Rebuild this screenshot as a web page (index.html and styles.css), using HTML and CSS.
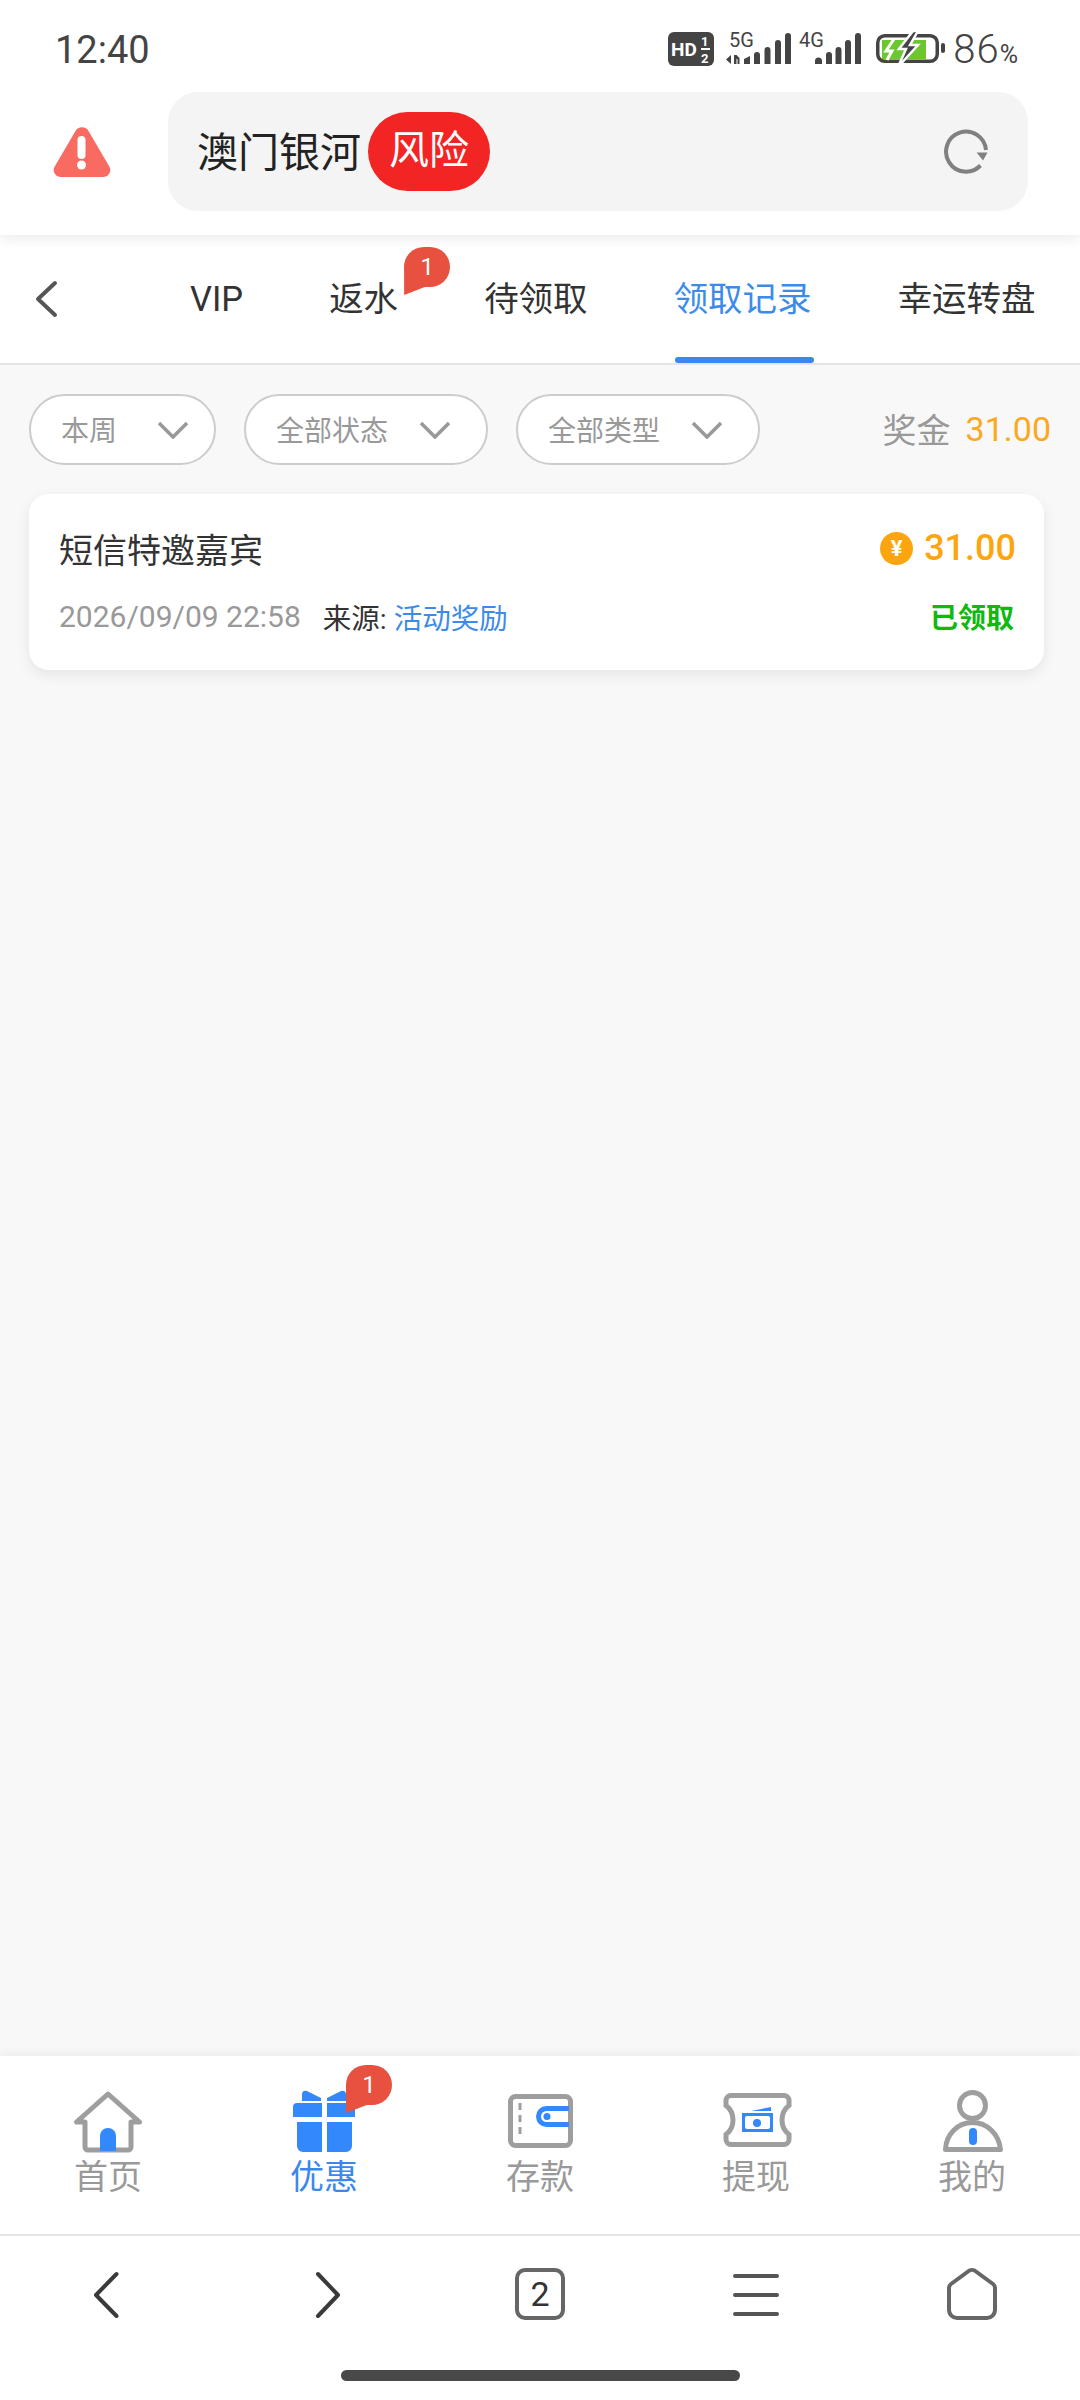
FILE: index.html
```html
<!DOCTYPE html>
<html lang="zh">
<head>
    <meta charset="utf-8">
    <title>领取记录</title>
    <link rel="stylesheet" href="styles.css">
</head>
<body>
    <div class="header">
        <div class="status-bar">
            <span class="time">12:40</span>
            <div class="status-icons">
                <svg class="ic-hd" width="46" height="34" viewBox="0 0 46 34">
                    <rect width="46" height="34" rx="6" fill="#444"/>
                    <text x="3" y="24" class="hd-text">HD</text>
                    <text x="33" y="14" class="hd-num">1</text>
                    <rect x="33" y="16" width="9" height="2" fill="#fff"/>
                    <text x="33" y="31" class="hd-num">2</text>
                </svg>
                <svg class="ic-sig ic-sig5" width="68" height="46" viewBox="0 -12 68 46">
                    <text x="5" y="15" class="sig-text">5G</text>
                    <path d="M7 23v9l-5-4.500zM10 32v-9h2.500l3 3v6h-2v-5h-1v5z" fill="#444"/>
                    <path d="M20 27l6-3v8h-6zM30 23a3 3 0 0 1 6 0v9h-6zM40.500 18a3 3 0 0 1 6 0v14h-6zM51 11a3 3 0 0 1 6 0v21h-6zM61 4a3 3 0 0 1 6 0v28h-6z" fill="#444"/>
                </svg>
                <svg class="ic-sig ic-sig4" width="64" height="46" viewBox="0 -12 64 46">
                    <text x="1" y="15" class="sig-text">4G</text>
                    <path d="M17 29a3 3 0 0 1 7 0v3h-7zM28 23a3 3 0 0 1 6 0v9h-6zM37.500 18a3 3 0 0 1 6 0v14h-6zM47 11a3 3 0 0 1 6 0v21h-6zM57 4a3 3 0 0 1 6 0v28h-6z" fill="#444"/>
                </svg>
                <svg class="ic-batt" width="70" height="38" viewBox="0 0 70 38">
                    <rect x="1.750" y="5.750" width="59.500" height="25.500" rx="7" fill="#fff" stroke="#444" stroke-width="3.500"/>
                    <path d="M6 10h44v19H6z" fill="#6cc62e"/>
                    <path d="M18 9l-8 12h6l-5 9" fill="none" stroke="#fff" stroke-width="3"/>
                    <path d="M37 1L23 19h7l-8 18 20-22h-8l8-14z" fill="#444" stroke="#fff" stroke-width="2.500"/>
                    <rect x="65" y="13" width="4" height="10" rx="2" fill="#444"/>
                </svg>
            </div>
            <span class="battery-num">86<small>%</small></span>
        </div>
        <div class="address-row">
            <div class="warn-box">
                <svg width="58" height="50" viewBox="0 0 58 50">
                    <path d="M22.500 4a7.500 7.500 0 0 1 13 0l20.500 35a7 7 0 0 1-6 11H8a7 7 0 0 1-6-11z" fill="#f96a60"/>
                    <rect x="24.500" y="9" width="8" height="23" rx="4" fill="#fff"/>
                    <circle cx="28.500" cy="38" r="4.500" fill="#fff"/>
                </svg>
            </div>
            <div class="address-pill">
                <span class="site-name">澳门银河</span>
                <span class="risk-tag">风险</span>
                <svg class="reload" width="48" height="48" viewBox="0 0 48 48">
                    <path d="M44 22A20 20 0 1 0 38.500 37.500" fill="none" stroke="#808080" stroke-width="4"/>
                    <path d="M34.500 24.500h11L41 32.500z" fill="#808080"/>
                </svg>
            </div>
        </div>
    </div>

    <div class="tabs">
        <div class="tab-back">
            <svg width="24" height="38" viewBox="0 0 24 38">
                <path d="M21 3L4 19l17 16" fill="none" stroke="#555" stroke-width="4" stroke-linecap="round" stroke-linejoin="round"/>
            </svg>
        </div>
        <div class="tab">VIP</div>
        <div class="tab">返水<span class="badge badge-tab">1</span></div>
        <div class="tab">待领取</div>
        <div class="tab active">领取记录</div>
        <div class="tab">幸运转盘</div>
    </div>

    <div class="content">
        <div class="filters">
            <div class="chip chip-short">本周
                <svg width="30" height="18" viewBox="0 0 30 18"><path d="M1 2l14 14L29 2" fill="none" stroke="#999" stroke-width="3.500"/></svg>
            </div>
            <div class="chip">全部状态
                <svg width="30" height="18" viewBox="0 0 30 18"><path d="M1 2l14 14L29 2" fill="none" stroke="#999" stroke-width="3.500"/></svg>
            </div>
            <div class="chip">全部类型
                <svg width="30" height="18" viewBox="0 0 30 18"><path d="M1 2l14 14L29 2" fill="none" stroke="#999" stroke-width="3.500"/></svg>
            </div>
            <div class="bonus">奖金<span class="bonus-num">31.00</span></div>
        </div>

        <div class="card">
            <div class="card-row card-top">
                <span class="card-title">短信特邀嘉宾</span>
                <span class="amount"><span class="coin">¥</span>31.00</span>
            </div>
            <div class="card-row card-bottom">
                <span class="card-date">2026/09/09 22:58</span>
                <span class="card-source">来源: <span class="link">活动奖励</span></span>
                <span class="card-state">已领取</span>
            </div>
        </div>
    </div>

    <div class="nav">
        <div class="nav-item">
            <svg width="72" height="64" viewBox="0 0 72 64">
                <path d="M13 32v25a3 3 0 0 0 3 3h40a3 3 0 0 0 3-3V32h8.500L36 4 4.500 32z" fill="none" stroke="#9e9e9e" stroke-width="5" stroke-linejoin="round"/>
                <path d="M28 61V46a8 8 0 0 1 16 0v15z" fill="#3388fb"/>
            </svg>
            <span class="nav-label">首页</span>
        </div>
        <div class="nav-item active">
            <svg width="72" height="64" viewBox="0 0 72 64" fill="#3388fb">
                <path d="M14 11V4c0-3 3-4 5-3l14 7v3zM58 11V4c0-3-3-4-5-3L39 8v3z"/>
                <path d="M9 13h25v14H5v-10a4 4 0 0 1 4-4zM39 13h24a4 4 0 0 1 4 4v10H39z"/>
                <path d="M9 32h25v30H15a6 6 0 0 1-6-6zM39 32h25v24a6 6 0 0 1-6 6H39z"/>
            </svg>
            <span class="badge badge-nav">1</span>
            <span class="nav-label">优惠</span>
        </div>
        <div class="nav-item">
            <svg width="72" height="64" viewBox="0 0 72 64">
                <rect x="6.500" y="6.500" width="60" height="49" rx="5" fill="none" stroke="#9e9e9e" stroke-width="5"/>
                <path d="M16 13v35" stroke="#9e9e9e" stroke-width="3" stroke-dasharray="7 5"/>
                <path d="M65 18.500H42.500a8 8 0 0 0 0 16H65" fill="none" stroke="#3388fb" stroke-width="5"/>
                <circle cx="43" cy="26.500" r="3.500" fill="#3388fb"/>
            </svg>
            <span class="nav-label">存款</span>
        </div>
        <div class="nav-item">
            <svg width="72" height="64" viewBox="0 0 72 64">
                <path d="M11 5.500H64a5 5 0 0 1 5 5v5c-4 3-7 8-7 14.500s3 11.500 7 14.500v5a5 5 0 0 1-5 5H11a5 5 0 0 1-5-5v-5c4-3 7-8 7-14.500s-3-11.500-7-14.500v-5a5 5 0 0 1 5-5z" fill="none" stroke="#9e9e9e" stroke-width="5"/>
                <path d="M31 21l20-4v4z" fill="#3388fb"/>
                <rect x="22" y="23" width="31" height="19" fill="#3388fb"/>
                <rect x="25" y="26" width="25" height="13" rx="2" fill="#fff"/>
                <circle cx="37" cy="33" r="4" fill="#3388fb"/>
            </svg>
            <span class="nav-label">提现</span>
        </div>
        <div class="nav-item">
            <svg width="72" height="64" viewBox="0 0 72 64">
                <circle cx="36.500" cy="15.500" r="13" fill="none" stroke="#9e9e9e" stroke-width="5"/>
                <path d="M9.500 59.500C10 44 22 32.500 36.500 32.500S63 44 64.500 59.500z" fill="none" stroke="#9e9e9e" stroke-width="5" stroke-linejoin="round"/>
                <rect x="33" y="38" width="8" height="17" rx="4" fill="#3388fb"/>
            </svg>
            <span class="nav-label">我的</span>
        </div>
    </div>

    <div class="browser-bar">
        <div class="browser-icons">
            <svg width="60" height="60" viewBox="0 0 60 60"><path d="M38.500 10L18 31l20.500 21" fill="none" stroke="#3a3a3a" stroke-width="4" stroke-linecap="round" stroke-linejoin="round"/></svg>
            <svg width="60" height="60" viewBox="0 0 60 60"><path d="M24 10l20 21-20 21" fill="none" stroke="#3a3a3a" stroke-width="4" stroke-linecap="round" stroke-linejoin="round"/></svg>
            <svg width="60" height="60" viewBox="0 0 60 60">
                <rect x="7" y="6" width="46" height="48" rx="8" fill="none" stroke="#666" stroke-width="4"/>
                <text x="30" y="42" text-anchor="middle" class="tab-count">2</text>
            </svg>
            <svg width="60" height="60" viewBox="0 0 60 60"><path d="M9 12h42M9 31h42M9 50h42" stroke="#555" stroke-width="4" stroke-linecap="round"/></svg>
            <svg width="60" height="60" viewBox="0 0 60 60"><path d="M7 24a5 5 0 0 1 2-4L26 7.500a6 6 0 0 1 8 0L51 20a5 5 0 0 1 2 4v22a8 8 0 0 1-8 8H15a8 8 0 0 1-8-8z" fill="none" stroke="#666" stroke-width="4"/></svg>
        </div>
        <div class="home-indicator"></div>
    </div>
</body>
</html>
```

FILE: styles.css
```css
body {
    margin: 0;
    width: 1080px;
    height: 2400px;
    display: flex;
    flex-direction: column;
    overflow: hidden;
    background-color: #f8f8f8;
    font-family: Roboto, "Noto Sans CJK SC", sans-serif;
    color: #333;
}

svg {
    display: block;
    flex-shrink: 0;
}

/* top area */
.header {
    height: 235px;
    background-color: #fff;
    box-shadow: 0 2px 14px rgba(0, 0, 0, .1);
    position: relative;
    z-index: 2;
}

.status-bar {
    height: 92px;
    display: flex;
    align-items: center;
    padding: 6px 62px 0 55px;
    box-sizing: border-box;
    color: #444;
}

.time {
    font-size: 38px;
    flex-grow: 1;
    margin-top: 2px;
}

.status-icons {
    display: flex;
    align-items: center;
}

.ic-sig { margin-top: -12px; }
.ic-sig5 { margin-left: 10px; }
.ic-sig4 { margin-left: 6px; }
.ic-batt { margin-left: 14px; }

.hd-text { font-size: 19px; font-weight: 700; fill: #fff; }
.hd-num { font-size: 13px; font-weight: 700; fill: #fff; }
.sig-text { font-size: 20px; fill: #444; }

.battery-num {
    font-size: 40px;
    font-weight: 300;
    letter-spacing: 1px;
    margin-left: 7px;
}

.battery-num small {
    font-size: 25px;
    font-weight: 400;
    letter-spacing: 0;
}

.address-row {
    display: flex;
    align-items: center;
    height: 119px;
}

.warn-box {
    width: 168px;
    display: flex;
    justify-content: center;
    padding-right: 4px;
    box-sizing: border-box;
}

.address-pill {
    width: 860px;
    height: 119px;
    box-sizing: border-box;
    padding: 0 38px 0 29px;
    display: flex;
    align-items: center;
    background-color: #f4f4f4;
    border-radius: 30px;
}

.site-name {
    font-size: 41px;
    color: #222;
    padding-bottom: 6px;
}

.risk-tag {
    margin-left: 7px;
    padding: 0 21px;
    height: 79px;
    line-height: 77px;
    font-size: 40px;
    color: #fff;
    background-color: #f32424;
    border-radius: 40px;
}

.reload {
    margin-left: auto;
}

/* tabs */
.tabs {
    height: 128px;
    display: flex;
    background-color: #fff;
    border-bottom: 2px solid #e4e4e4;
    flex-shrink: 0;
}

.tab-back {
    width: 147px;
    display: flex;
    align-items: center;
    padding-left: 34px;
    box-sizing: border-box;
}

.tab {
    padding: 0 43px;
    font-size: 34.500px;
    line-height: 128px;
    white-space: nowrap;
    position: relative;
}

.tab.active {
    color: #3d8be8;
}

.tab.active:after {
    content: "";
    position: absolute;
    left: 44px;
    right: 41px;
    bottom: 0;
    height: 6px;
    border-radius: 3px;
    background-color: #3a88ee;
}

/* red bubble */
.badge {
    position: absolute;
    width: 46px;
    height: 40px;
    border-radius: 20px;
    background-color: #e8503f;
    color: #fff;
    font-size: 24px;
    line-height: 40px;
    text-align: center;
}

.badge:after {
    content: "";
    position: absolute;
    left: 0;
    top: 20px;
    width: 22px;
    height: 28px;
    background-color: #e8503f;
    clip-path: polygon(0 0, 100% 70%, 0 100%);
}

.badge-tab {
    left: 118px;
    top: 12px;
}

.badge-nav {
    left: 130px;
    top: 9px;
}

/* filters and list */
.content {
    flex-grow: 1;
    padding: 29px 36px 0 29px;
}

.filters {
    display: flex;
    align-items: center;
    gap: 28px;
    height: 71px;
}

.chip {
    height: 71px;
    box-sizing: border-box;
    display: flex;
    align-items: center;
    gap: 32px;
    padding: 0 36px 2px 30px;
    border: 2px solid #ccc;
    border-radius: 36px;
    background-color: #fff;
    color: #999;
    font-size: 28px;
}

.chip svg {
    margin-top: 2px;
}

.chip-short {
    gap: 41px;
    padding-right: 26px;
}

.bonus {
    margin-left: auto;
    margin-right: -7px;
    padding-bottom: 2px;
    font-size: 34px;
    color: #999;
    display: flex;
    align-items: center;
    gap: 15px;
}

.bonus-num {
    color: #fba81e;
}

.card {
    margin-top: 29px;
    padding: 30px 30px 0;
    height: 176px;
    box-sizing: border-box;
    background-color: #fff;
    border-radius: 20px;
    box-shadow: 0 5px 14px rgba(0, 0, 0, .08);
}

.card-row {
    display: flex;
    align-items: center;
}

.card-top {
    height: 48px;
    justify-content: space-between;
}

.card-bottom {
    height: 40px;
    margin-top: 24px;
}

.card-title {
    font-size: 34px;
}

.amount {
    display: flex;
    align-items: center;
    gap: 11px;
    margin-right: -2px;
    color: #fda50f;
    font-size: 36px;
    font-weight: 500;
}

.coin {
    width: 33px;
    height: 33px;
    border-radius: 50%;
    background-color: #fda50f;
    color: #fff;
    font-size: 22px;
    font-weight: 700;
    line-height: 33px;
    text-align: center;
}

.card-date {
    font-size: 30px;
    color: #999;
}

.card-source {
    margin-left: 22px;
    font-size: 28.500px;
}

.link {
    color: #3d8be8;
}

.card-state {
    margin-left: auto;
    font-size: 28px;
    font-weight: 700;
    color: #0fb90f;
}

/* bottom nav */
.nav {
    height: 178px;
    display: grid;
    grid-template-columns: repeat(5, 1fr);
    background-color: #fff;
    border-bottom: 2px solid #e6e6e6;
    box-shadow: 0 -2px 10px rgba(0, 0, 0, .06);
    flex-shrink: 0;
}

.nav-item {
    position: relative;
    display: flex;
    flex-direction: column;
    align-items: center;
    padding-top: 34px;
}

.nav-label {
    margin-top: 3px;
    font-size: 34px;
    line-height: 40px;
    color: #999;
}

.nav-item.active .nav-label {
    color: #3a88ee;
}

/* browser bar */
.browser-bar {
    height: 164px;
    background-color: #fff;
    flex-shrink: 0;
}

.browser-icons {
    display: grid;
    grid-template-columns: repeat(5, 1fr);
    justify-items: center;
    padding-top: 28px;
}

.tab-count {
    font-size: 34px;
    fill: #333;
}

.home-indicator {
    width: 399px;
    height: 11px;
    margin: 46px auto 0;
    border-radius: 6px;
    background-color: #484848;
}
```
